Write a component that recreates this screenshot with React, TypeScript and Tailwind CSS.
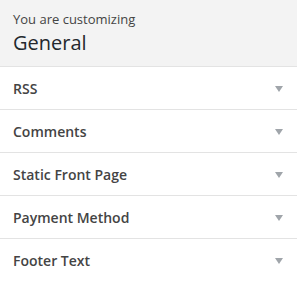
const sections = ["RSS", "Comments", "Static Front Page", "Payment Method", "Footer Text"];

function Arrow() {
  return (
    <svg width="8" height="6" viewBox="0 0 8 6" className="shrink-0 mt-[1px]">
      <path d="M0 0h8L4 6z" fill="#a0a5aa" />
    </svg>
  );
}

export default function App() {
  return (
    <div className="w-[297px] h-[281px] bg-white font-['Open_Sans',sans-serif] overflow-hidden">
      {/* panel title */}
      <div className="h-[67px] bg-[#f3f3f3] border-b border-[#e3e3e3] pl-[13px] pt-[9px]">
        <div className="text-[13px] leading-[20px] text-[#444]">You are customizing</div>
        <div className="text-[20px] leading-[27px] text-[#23282d]">General</div>
      </div>

      {sections.map((s) => (
        <div
          key={s}
          className="h-[43px] border-b border-[#e3e3e3] flex items-center justify-between pl-[13px] pr-[14px]"
        >
          <span className="text-[14px] font-semibold text-[#444]">{s}</span>
          <Arrow />
        </div>
      ))}
    </div>
  );
}
